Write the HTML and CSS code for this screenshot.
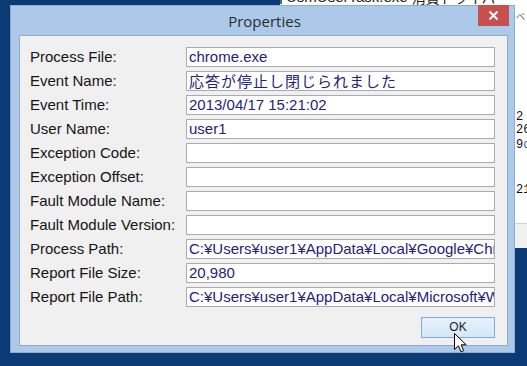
FILE: index.html
```html
<!DOCTYPE html>
<html lang="ja">
<head>
<meta charset="utf-8">
<title>Properties</title>
<link rel="stylesheet" href="styles.css">
</head>
<body>
<div class="desktop">
  <div class="bgwin-top">
    <span class="bg-icon"></span><span class="bg-name">UsmUserTask.exe</span><span class="bg-desc">消費ドライバーリスト</span>
  </div>
  <div class="bgwin-right">
    <div class="bg-list">
      <div class="bg-hdr">ベ</div>
      <div class="bg-line l1">2</div>
      <div class="bg-line l2">26</div>
      <div class="bg-line l3">9<span class="blue">d</span></div>
      <div class="bg-line l4">21</div>
    </div>
    <div class="bg-status"></div>
  </div>

  <div class="dialog">
    <div class="titlebar">
      <span class="title">Properties</span>
      <div class="close">
        <svg width="31" height="21" viewBox="0 0 31 21"><path d="M11.5 6.5 L19.5 14.5 M19.5 6.5 L11.5 14.5" stroke="#fff" stroke-width="2" fill="none"/></svg>
      </div>
    </div>
    <div class="client">
      <div class="form">
        <div class="label">Process File:</div><div class="field">chrome.exe</div>
        <div class="label">Event Name:</div><div class="field jp">応答が停止し閉じられました</div>
        <div class="label">Event Time:</div><div class="field">2013/04/17 15:21:02</div>
        <div class="label">User Name:</div><div class="field">user1</div>
        <div class="label">Exception Code:</div><div class="field"></div>
        <div class="label">Exception Offset:</div><div class="field"></div>
        <div class="label">Fault Module Name:</div><div class="field"></div>
        <div class="label">Fault Module Version:</div><div class="field"></div>
        <div class="label">Process Path:</div><div class="field">C:¥Users¥user1¥AppData¥Local¥Google¥Chrome¥Application¥chrome.exe</div>
        <div class="label">Report File Size:</div><div class="field">20,980</div>
        <div class="label">Report File Path:</div><div class="field">C:¥Users¥user1¥AppData¥Local¥Microsoft¥Windows¥WER</div>
      </div>
      <div class="buttons">
        <div class="btn">OK</div>
      </div>
    </div>
  </div>

  <svg class="cursor" width="14" height="21" viewBox="0 0 14 21"><path d="M0.5 0.5 L0.5 16.5 L4.5 12.8 L7 18.8 L9.6 17.7 L7.2 11.8 L12.2 11.8 Z" fill="#fff" stroke="#000" stroke-width="1" stroke-linejoin="miter"/></svg>
</div>
</body>
</html>
```

FILE: styles.css
```css
html, body {
  margin: 0;
  padding: 0;
}
body {
  background: #0c3a74;
  font-family: "Liberation Sans", Arial, sans-serif;
}
.desktop {
  position: relative;
  width: 527px;
  height: 366px;
  overflow: hidden;
  background: #0c3a74;
}

/* background windows */
.bgwin-top {
  position: absolute;
  left: 280px;
  top: -12px;
  width: 260px;
  height: 17px;
  background: #fff;
  display: flex;
  align-items: center;
  gap: 4px;
  font-size: 15px;
  line-height: 16px;
  color: #222;
  white-space: nowrap;
}
.bg-icon {
  width: 10px;
  height: 12px;
  border: 1px solid #3a7a5a;
  background: #cfe5d5;
}
.bg-name { width: 148px; }
.bg-desc { font-family: "Noto Sans CJK JP", sans-serif; font-size: 14px; }

.bgwin-right {
  position: absolute;
  left: 500px;
  top: 0;
  width: 40px;
  height: 248px;
  display: flex;
  flex-direction: column;
}
.bg-list {
  height: 223px;
  background: #fff;
  border-bottom: 1px solid #d0d0d0;
  padding-left: 16px;
  font-family: "Liberation Mono", monospace;
  font-size: 12px;
  color: #111;
  display: flex;
  flex-direction: column;
}
.bg-hdr {
  margin-top: 12px;
  height: 10px;
  font-family: "Noto Sans CJK JP", sans-serif;
  font-size: 9px;
  line-height: 10px;
  color: #666;
}
.bg-line {
  height: 12px;
  line-height: 12px;
}
.l1 { margin-top: 89px; }
.l2 { margin-top: 1px; }
.l3 { margin-top: 3px; }
.l4 { margin-top: 33px; }
.blue { color: #2a6fd0; }
.bg-status {
  flex: 1;
  background: #f0f0f0;
}

/* dialog */
.dialog {
  position: absolute;
  left: 10px;
  top: 5px;
  width: 505px;
  height: 348px;
  box-sizing: border-box;
  border: 1px solid #8eadd3;
  background: #adc9ea;
  display: flex;
  flex-direction: column;
}
.titlebar {
  position: relative;
  height: 29px;
  display: flex;
  align-items: center;
  justify-content: center;
}
.title {
  font-family: "Open Sans", "Noto Sans", sans-serif;
  font-size: 15px;
  color: #2b2b2b;
  margin-left: 4px;
}
.close {
  position: absolute;
  top: -1px;
  right: 5px;
  width: 31px;
  height: 21px;
  background: #c7504f;
}
.close svg { display: block; }

.client {
  margin: 0 6px 0 8px;
  height: 311px;
  box-sizing: border-box;
  border: 1px solid #93a9c5;
  background: #f0f0f0;
  padding: 11px 12px 7px 10px;
  display: flex;
  flex-direction: column;
}
.form {
  display: grid;
  grid-template-columns: 156px 309px;
  row-gap: 4px;
}
.label {
  height: 20px;
  line-height: 20px;
  font-size: 15px;
  color: #141414;
  white-space: nowrap;
}
.field {
  height: 20px;
  box-sizing: border-box;
  border: 1px solid #a9abb0;
  background: #fff;
  padding: 0 2px;
  font-size: 15px;
  line-height: 18px;
  color: #23237e;
  white-space: nowrap;
  overflow: hidden;
}
.field.jp {
  font-family: "Noto Sans CJK JP", sans-serif;
  letter-spacing: 1px;
}
.buttons {
  margin-top: 10px;
  display: flex;
  justify-content: flex-end;
}
.btn {
  width: 74px;
  height: 21px;
  box-sizing: border-box;
  border: 1px solid #7aaee0;
  background: linear-gradient(#e6f1fc, #d5e7f8);
  font-size: 12px;
  line-height: 19px;
  text-align: center;
  color: #1a1a1a;
}

.cursor {
  position: absolute;
  left: 454px;
  top: 333px;
}
```
